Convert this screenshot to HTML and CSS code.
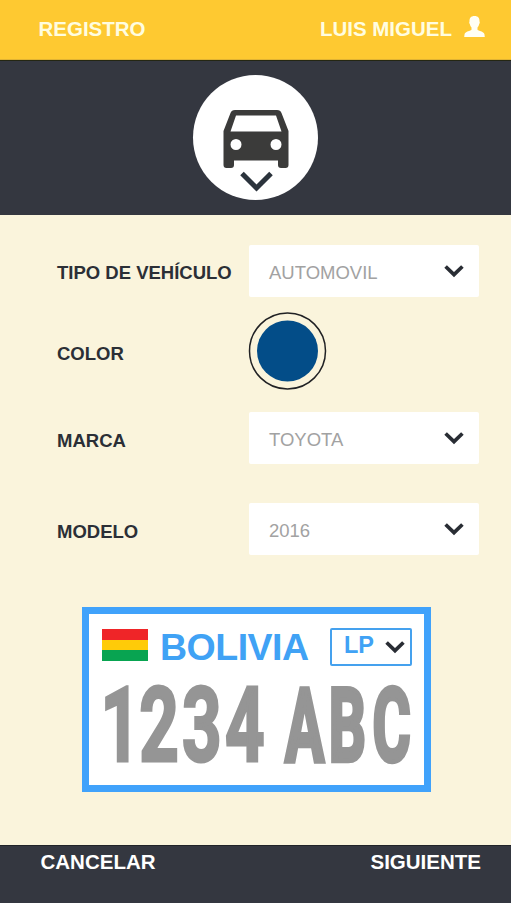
FILE: index.html
```html
<!DOCTYPE html>
<html lang="es">
<head>
<meta charset="utf-8">
<title>Registro</title>
<link rel="stylesheet" href="styles.css">
</head>
<body>
<svg width="0" height="0" class="defs"><defs><symbol id="chevron" viewBox="0 0 20 13"><path d="M1.600 1.500 10 9.600 18.400 1.500" fill="none" stroke="currentColor" stroke-width="3.700"/></symbol></defs></svg>
<header class="topbar">
  <span>REGISTRO</span>
  <div class="user"><span>LUIS MIGUEL</span>
    <svg width="21" height="21" viewBox="0 0 21 21"><path d="M10.500 0C6.800 0 5.300 2.200 5.500 5.500c-.5.500-.3 2 .4 2.700.3 1.500.9 2.500 1.600 3.200v2.400C6.500 15 1.500 15.500.600 18L.200 21h20.600l-.4-3c-.9-2.500-5.900-3-6.900-4.200v-2.400c.7-.7 1.300-1.700 1.600-3.200.7-.7.9-2.200.4-2.700C15.700 2.200 14.200 0 10.500 0z" fill="#fffff4"/></svg>
  </div>
</header>
<section class="hero">
  <div class="badge">
    <svg width="125" height="125" viewBox="0 0 125 125">
      <path fill="#3b3b3a" fill-rule="evenodd" d="M42 35H84Q87.500 35 88.500 38L95.500 56V90Q95.500 93 92.500 93H88Q85 93 85 90V85.500H41V90Q41 93 38 93H33.500Q30.500 93 30.500 90V56L37.500 38Q38.500 35 42 35ZM43 40.500 37.500 56.500H88.500L83 40.500ZM43 64A5.500 5.500 0 1 0 43 75A5.500 5.500 0 1 0 43 64ZM83 64A5.500 5.500 0 1 0 83 75A5.500 5.500 0 1 0 83 64Z"/>
      <path d="M49 98.500 63.500 113 78 98.500" fill="none" stroke="#2b333c" stroke-width="5"/>
    </svg>
  </div>
</section>
<main class="form">
  <div class="row"><label>TIPO DE VEHÍCULO</label><div class="select"><span>AUTOMOVIL</span><svg class="chev"><use href="#chevron"/></svg></div></div>
  <div class="row row-color"><label>COLOR</label><svg class="color-picker" width="78" height="78" viewBox="0 0 78 78"><circle cx="38.500" cy="39" r="38" fill="none" stroke="#202124" stroke-width="1.500"/><circle cx="38.500" cy="39" r="30.500" fill="#034d88"/></svg></div>
  <div class="row row-brand"><label>MARCA</label><div class="select"><span>TOYOTA</span><svg class="chev"><use href="#chevron"/></svg></div></div>
  <div class="row row-model"><label>MODELO</label><div class="select"><span>2016</span><svg class="chev"><use href="#chevron"/></svg></div></div>
  <div class="plate">
    <div class="plate-head">
      <div class="flag"><i></i><i></i><i></i></div>
      <span class="country">BOLIVIA</span>
      <div class="region"><span>LP</span><svg class="chev"><use href="#chevron"/></svg></div>
    </div>
    <svg class="number" width="334" height="114" viewBox="0 0 334 114">
      <text transform="scale(.67 1)" x="17 75 139 203" y="93.500">1234</text>
      <text class="letters" transform="scale(.575 1)" x="341 417 493" y="93.500">ABC</text>
    </svg>
  </div>
</main>
<footer class="actions"><span>CANCELAR</span><span>SIGUIENTE</span></footer>
</body>
</html>
```
FILE: styles.css
```css
* { box-sizing: border-box; }
body { margin: 0; width: 511px; height: 903px; display: flex; flex-direction: column; font-family: "Liberation Sans", Arial, sans-serif; background: #faf4dc; overflow: hidden; }
.defs { position: absolute; }
svg { display: block; flex: none; }
span, label { white-space: nowrap; }
.topbar { height: 60px; flex: none; background: #fec931; color: #fffde0; font-size: 20.500px; font-weight: bold; display: flex; justify-content: space-between; align-items: flex-start; padding: 16px 26px 0 38.500px; line-height: 26px; border-bottom: 1px solid #e1b334; }
.user { display: flex; gap: 12px; }
.hero { height: 155px; flex: none; background: #343740; border-top: 1px solid #242613; display: flex; justify-content: center; padding: 14px 0 0 0; }
.badge { width: 125px; height: 125px; border-radius: 50%; background: #fff; margin-left: .5px; }
.form { height: 630px; flex: none; padding: 30px 32px 0 57px; }
.row { display: grid; grid-template-columns: 192px 230px; align-items: center; height: 52px; }
.row label { font-size: 18.500px; font-weight: bold; color: #2b2f36; padding-top: 4px; }
.select { height: 52px; background: #fff; border-radius: 2px; display: flex; align-items: center; justify-content: space-between; padding: 0 15px 0 20px; color: #a2a2a2; font-size: 18.500px; }
.select span { padding-top: 3px; }
.chev { width: 20px; height: 13px; color: #292d34; }
.row-color { height: 78px; margin-top: 15px; }
.row-color label { padding-top: 5px; }
.color-picker { overflow: visible; }
.row-brand { margin-top: 22px; }
.row-brand label, .row-model label { padding-top: 5px; }
.row-brand .select span, .row-model .select span { padding-top: 4px; }
.row-model { margin-top: 39px; }
.plate { width: 349px; height: 185px; margin: 52px 0 0 25px; background: #fff; border: 7px solid #40a2fb; }
.plate-head { display: flex; height: 53px; padding: 14px 12px 0 13px; align-items: flex-start; }
.flag { width: 46px; height: 32px; margin-top: 1px; display: grid; grid-template-rows: 11px 10px 11px; }
.flag i:nth-child(1) { background: #ef2528; }
.flag i:nth-child(2) { background: #ffcb08; }
.flag i:nth-child(3) { background: #08a451; }
.country { font-size: 37.500px; font-weight: bold; color: #40a2f5; line-height: 39px; margin-left: 12px; letter-spacing: -.5px; }
.region { margin-left: auto; width: 82px; height: 38px; border: 2px solid #45a1ee; border-radius: 2px; display: flex; align-items: center; justify-content: space-between; padding: 0 5px 0 12px; color: #40a2f5; font-size: 23.500px; font-weight: bold; }
.region span { padding-bottom: 3px; }
.number { overflow: visible; }
.number text { font-family: Roboto, sans-serif; font-weight: bold; font-size: 103px; fill: #959595; stroke: #959595; stroke-width: 3px; }
.number .letters { font-size: 101.500px; stroke-width: 4.500px; }
.actions { height: 58px; flex: none; border-top: 1px solid #202328; background: #343740; color: #fff; font-size: 20.500px; font-weight: bold; display: flex; justify-content: space-between; padding: 3px 30px 0 40.500px; line-height: 25px; }
```
